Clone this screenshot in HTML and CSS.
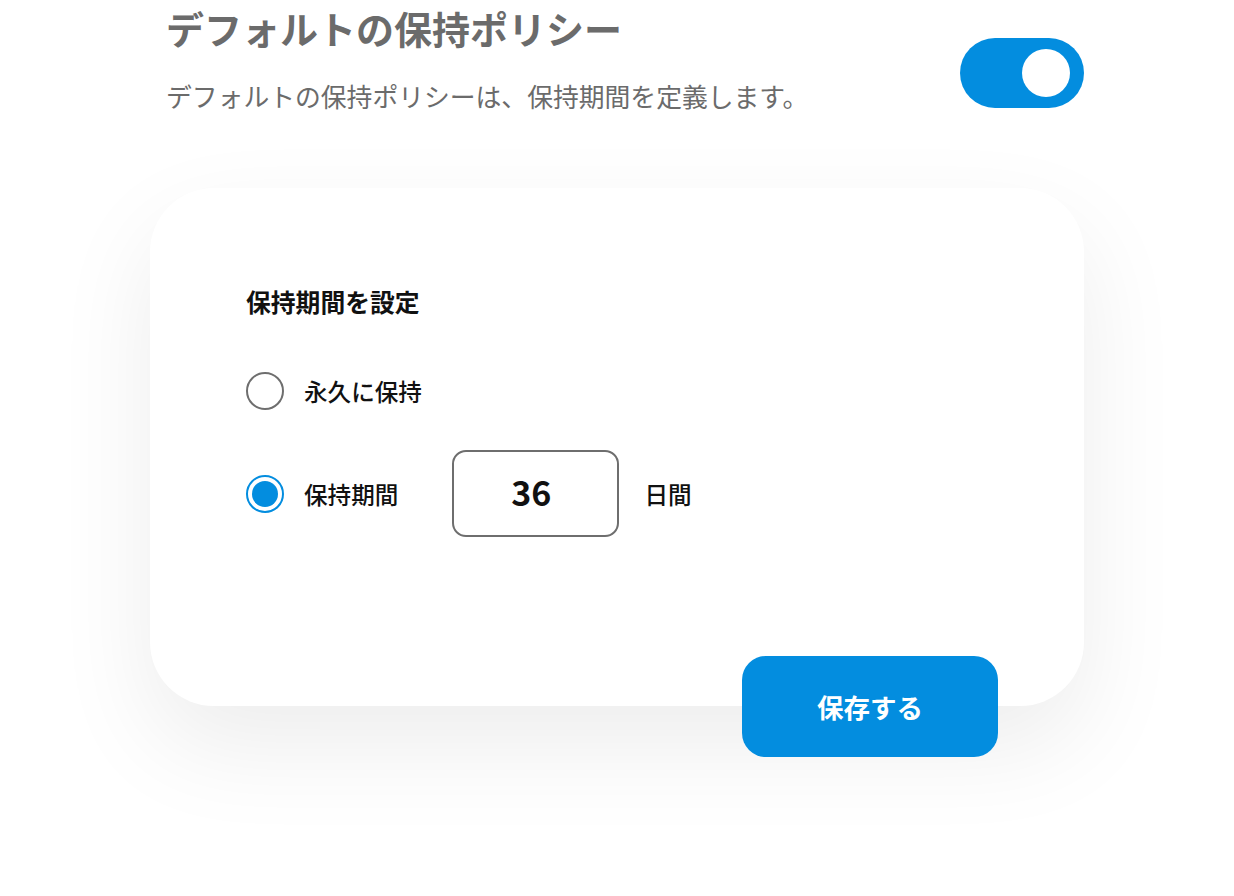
FILE: index.html
```html
<!DOCTYPE html>
<html lang="ja">
<head>
<meta charset="utf-8">
<title>デフォルトの保持ポリシー</title>
<link rel="stylesheet" href="styles.css">
</head>
<body>
<div class="page">
  <header class="header">
    <div class="header-text">
      <h1 class="title">デフォルトの保持ポリシー</h1>
      <p class="subtitle">デフォルトの保持ポリシーは、保持期間を定義します。</p>
    </div>
    <div class="toggle" role="switch" aria-checked="true"><span class="knob"></span></div>
  </header>

  <section class="card">
    <h2 class="card-title">保持期間を設定</h2>
    <div class="row row-first">
      <span class="radio"></span>
      <span class="label">永久に保持</span>
    </div>
    <div class="row row-second">
      <span class="radio radio-on"><span class="dot"></span></span>
      <span class="label">保持期間</span>
      <div class="input">36</div>
      <span class="label unit">日間</span>
    </div>
    <div class="footer">
      <button class="save">保存する</button>
    </div>
  </section>
</div>
</body>
</html>
```
FILE: styles.css
```css
* { box-sizing: border-box; }
html, body { margin: 0; padding: 0; background: #ffffff; }
body {
  font-family: "Noto Sans CJK JP", "Noto Sans", sans-serif;
  width: 1234px;
  height: 896px;
  overflow: hidden;
}
.page {
  padding-left: 150px;
  width: 1084px;
}
.header {
  display: flex;
  justify-content: space-between;
  align-items: flex-start;
  padding-left: 16px;
}
.header-text { padding-top: 4px; }
.title {
  margin: 0;
  font-size: 38px;
  line-height: 48px;
  font-weight: 700;
  color: #6b6b6b;
}
.subtitle {
  margin: 26px 0 0 0;
  font-size: 25.8px;
  line-height: 36px;
  font-weight: 400;
  color: #6b6b6b;
}
.toggle {
  margin-top: 38px;
  width: 124px;
  height: 70px;
  border-radius: 35px;
  background: #038ddf;
  display: flex;
  align-items: center;
  justify-content: flex-end;
  padding-right: 14px;
}
.knob {
  width: 48px;
  height: 48px;
  border-radius: 50%;
  background: #ffffff;
}
.card {
  margin-top: 74px;
  height: 518px;
  background: #ffffff;
  border-radius: 64px;
  box-shadow: 0 40px 100px rgba(0, 0, 0, 0.075);
  padding: 97px 86px 0 96px;
  display: flex;
  flex-direction: column;
}
.card-title {
  margin: 0;
  font-size: 24.8px;
  line-height: 32px;
  font-weight: 700;
  color: #111111;
}
.row {
  display: flex;
  align-items: center;
}
.row-first { margin-top: 55px; height: 38px; }
.row-second { margin-top: 40px; height: 87px; }
.radio {
  width: 38px;
  height: 38px;
  border-radius: 50%;
  border: 2px solid #6e6e6e;
  flex: none;
  display: flex;
  align-items: center;
  justify-content: center;
}
.radio-on { border-color: #038ddf; }
.dot {
  width: 26px;
  height: 26px;
  border-radius: 50%;
  background: #038ddf;
}
.label {
  margin-left: 20px;
  font-size: 23.6px;
  line-height: 32px;
  font-weight: 500;
  color: #111111;
}
.input {
  margin-left: 54px;
  width: 167px;
  height: 87px;
  border: 2px solid #6e6e6e;
  border-radius: 14px;
  display: flex;
  align-items: center;
  justify-content: center;
  font-size: 34px;
  line-height: 40px;
  padding: 0 9px 4px 0;
  font-weight: 600;
  color: #111111;
}
.unit { margin-left: 25px; }
.footer {
  margin-top: auto;
  margin-bottom: -51px;
  display: flex;
  justify-content: flex-end;
}
.save {
  width: 256px;
  height: 101px;
  border: none;
  border-radius: 24px;
  background: #038ddf;
  color: #ffffff;
  font-family: "Noto Sans CJK JP", "Noto Sans", sans-serif;
  font-size: 26.5px;
  font-weight: 700;
  padding: 0;
}
```
